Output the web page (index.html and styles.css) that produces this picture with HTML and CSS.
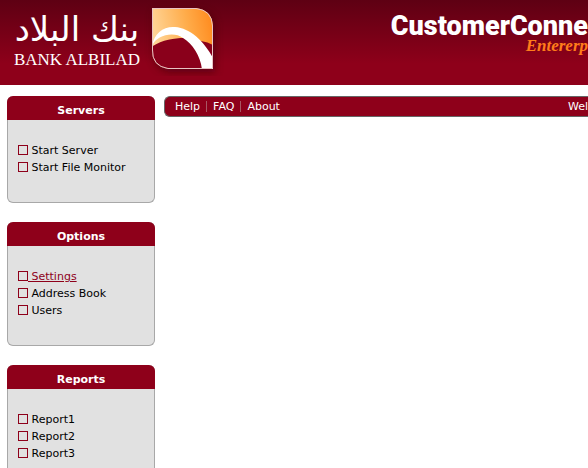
FILE: index.html
```
<!DOCTYPE html>
<html lang="en">
<head>
<meta charset="utf-8">
<title>Bank Albilad</title>
<link rel="stylesheet" href="styles.css">
</head>
<body>
<header class="banner">
  <div class="logo">
    <div class="wordmark">
      <span class="arabic" lang="ar" dir="rtl">بنك البلاد</span>
      <span class="latin">BANK ALBILAD</span>
    </div>
    <svg class="emblem" width="80" height="76" viewBox="0 0 80 76" aria-hidden="true">
      <defs>
        <linearGradient id="gold" x1="0" y1="0.2" x2="1" y2="0">
          <stop offset="0" stop-color="#ffdca4"/>
          <stop offset="0.5" stop-color="#ffac4a"/>
          <stop offset="0.8" stop-color="#ff8c20"/>
        </linearGradient>
        <filter id="shade" x="-30%" y="-30%" width="160%" height="160%"><feGaussianBlur stdDeviation="4"/></filter>
        <clipPath id="leaf"><path d="M8 8H52Q68 10 69 26V69H24Q8 66 8 50Z"/></clipPath>
      </defs>
      <path d="M10 11H54Q71 12 71 28V72H26Q10 69 10 53Z" fill="#40000e" opacity=".65" filter="url(#shade)"/>
      <g clip-path="url(#leaf)">
        <rect width="80" height="76" fill="url(#gold)"/>
        <path d="M7 47C18 40 30 38 40 38L57 41Q64 42 69 45V70H7Z" fill="#8a001b"/>
        <path d="M8 46C10 33 20 26 31 27C46 28 60 41 69 58V70H58C57 57 49 44 39 38C30 31 12 35 8 46Z" fill="#fff"/>
      </g>
      <path d="M8.500 8.500H52Q68 10 68.500 26V68.500H24Q8 66 8.500 50Z" fill="none" stroke="#e8c4c4"/>
    </svg>
  </div>
  <div class="product">
    <span class="product-name">CustomerConne</span>
    <span class="edition">Entererp</span>
  </div>
</header>
<div class="page">
  <aside class="sidebar">
    <section class="panel">
      <h2>Servers</h2>
      <ul>
        <li><a href="#"><i class="box"></i> Start Server</a></li>
        <li><a href="#"><i class="box"></i> Start File Monitor</a></li>
      </ul>
    </section>
    <section class="panel">
      <h2>Options</h2>
      <ul>
        <li><a class="current" href="#"><i class="box"></i> Settings</a></li>
        <li><a href="#"><i class="box"></i> Address Book</a></li>
        <li><a href="#"><i class="box"></i> Users</a></li>
      </ul>
    </section>
    <section class="panel">
      <h2>Reports</h2>
      <ul>
        <li><a href="#"><i class="box"></i> Report1</a></li>
        <li><a href="#"><i class="box"></i> Report2</a></li>
        <li><a href="#"><i class="box"></i> Report3</a></li>
      </ul>
    </section>
  </aside>
  <main class="content">
    <nav class="toolbar">
      <a href="#">Help</a><a href="#">FAQ</a><a href="#">About</a>
      <span class="welcome">Wel</span>
    </nav>
  </main>
</div>
</body>
</html>
```

FILE: styles.css
```
* { box-sizing: border-box; }
body {
  margin: 0;
  background: #fff;
  color: #000;
  font-family: Verdana, "DejaVu Sans", sans-serif;
  font-size: 11px;
  line-height: 17px;
}
a { color: inherit; text-decoration: none; }

.banner {
  display: flex;
  justify-content: space-between;
  align-items: flex-start;
  height: 85px;
  overflow: hidden;
  color: #fff;
  background: linear-gradient(#5e0013, #8e001a 75%);
}
.logo { display: flex; }
.wordmark {
  display: flex;
  flex-direction: column;
  align-items: center;
  width: 124px;
  margin-left: 15px;
  white-space: nowrap;
}
.arabic {
  height: 50px;
  font-family: "DejaVu Sans", sans-serif;
  font-size: 34px;
  line-height: 58px;
}
.latin {
  font-family: "Liberation Serif", serif;
  font-size: 17px;
  line-height: 20px;
}
.emblem { margin-left: 5px; }
.product {
  display: flex;
  flex-direction: column;
  align-items: flex-end;
  padding-top: 12px;
  white-space: nowrap;
}
.product-name {
  font-family: Impact, Roboto, "Liberation Sans", sans-serif;
  font-size: 27px;
  font-weight: 900;
  line-height: 28px;
}
.edition {
  color: #ff7d1a;
  font-family: "Brush Script MT", "Liberation Serif", cursive;
  font-size: 17px;
  font-style: italic;
  font-weight: bold;
  line-height: 12px;
}

.page { display: flex; gap: 9px; padding: 11px 0 0 7px; }
.sidebar { flex: 0 0 148px; }
.panel {
  margin-bottom: 19px;
  border: 1px solid #a8a8a8;
  border-top: 0;
  border-radius: 6px;
  background: #e1e1e1;
}
.panel h2 {
  margin: 0 -1px;
  padding-top: 5px;
  height: 24px;
  border-radius: 6px 6px 0 0;
  background: #8e001a;
  color: #fff;
  font-size: 11px;
  line-height: 20px;
  text-align: center;
}
.panel ul { margin: 0; padding: 22px 10px 26px; list-style: none; }
.panel li { height: 17px; white-space: nowrap; }
.box {
  display: inline-block;
  width: 10px;
  height: 10px;
  border: 1px solid #8e001a;
  vertical-align: -1px;
}
.current { color: #8e001a; text-decoration: underline; }

.content { flex: 1; min-width: 0; }
.toolbar {
  display: flex;
  align-items: center;
  height: 21px;
  padding-left: 4px;
  border: 1px solid #666;
  border-right: 0;
  border-radius: 6px 0 0 6px;
  background: #8e001a;
  color: #fff;
}
.toolbar a { padding: 0 6px; line-height: 11px; }
.toolbar a + a { border-left: 1px solid #a85763; }
.welcome { margin-left: auto; }
```
